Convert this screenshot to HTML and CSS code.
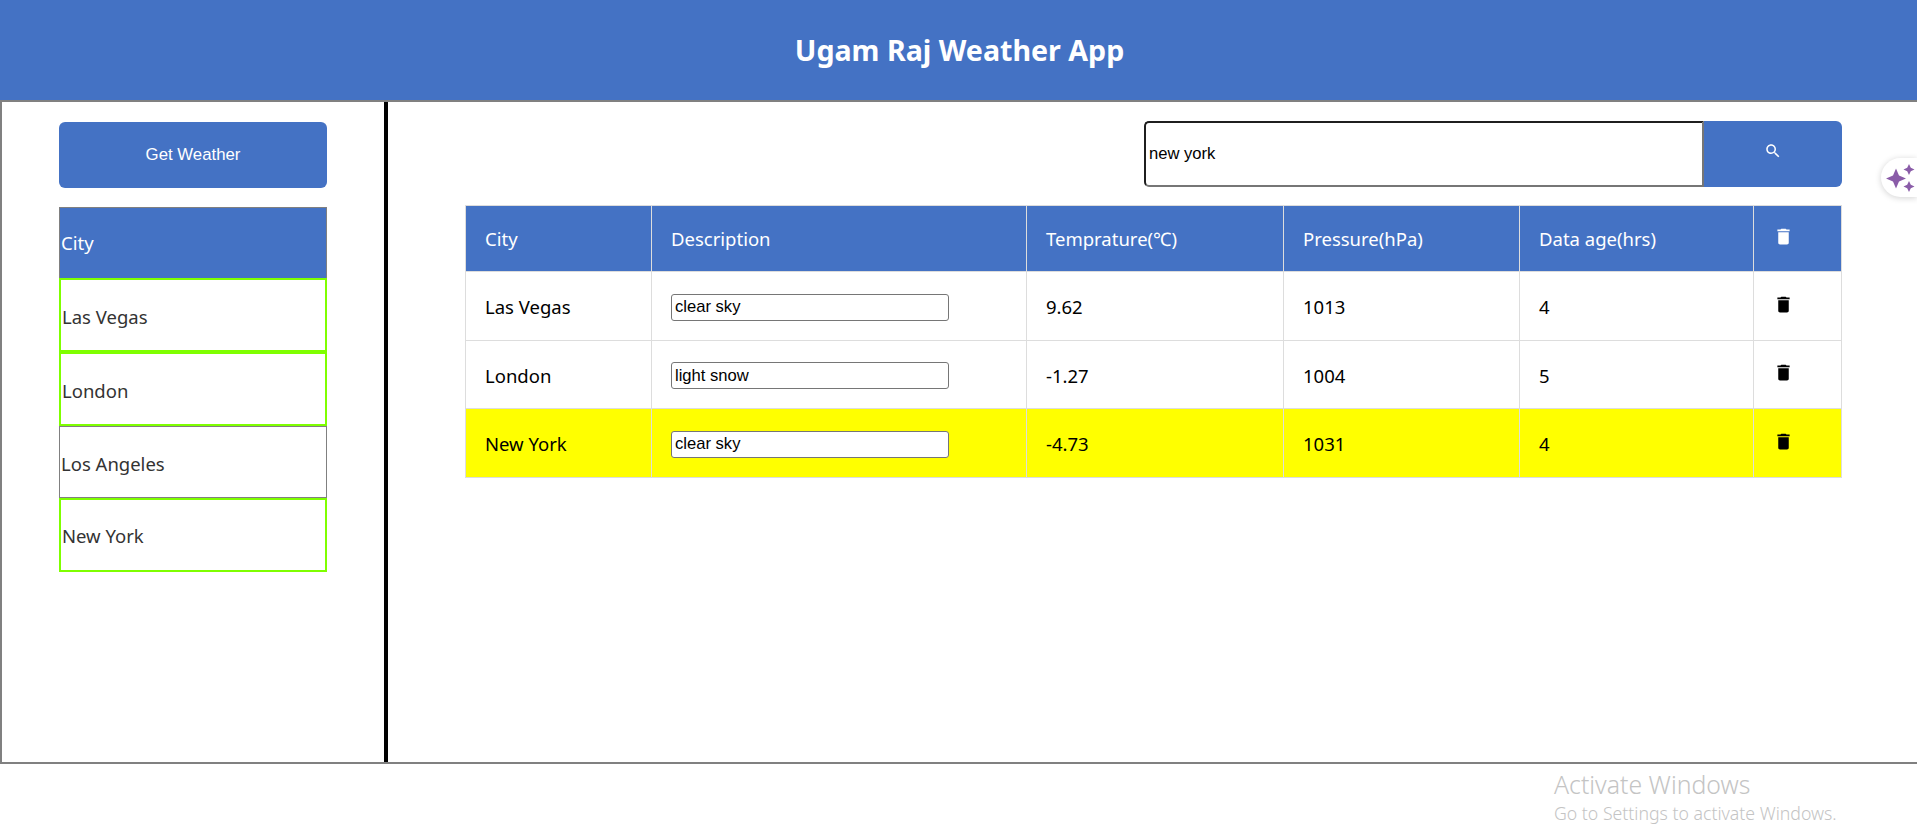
FILE: index.html
```html
<!DOCTYPE html>
<html lang="en">
<head>
    <meta charset="UTF-8">
    <meta name="viewport" content="width=device-width, initial-scale=1.0">
    <title>Ugam Raj Weather App</title>
    <link rel="stylesheet" href="styles.css">
</head>
<body>
    <header class="app-header">
        <h1>Ugam Raj Weather App</h1>
    </header>

    <div class="app-body">
        <aside class="sidebar">
            <button class="get-weather" type="button">Get Weather</button>
            <div class="city-list">
                <div class="city-head">City</div>
                <div class="city-item city-found">Las Vegas</div>
                <div class="city-item city-found">London</div>
                <div class="city-item city-plain">Los Angeles</div>
                <div class="city-item city-found">New York</div>
            </div>
        </aside>

        <main class="content">
            <form class="search">
                <input class="search-input" type="text" value="new york">
                <button class="search-btn" type="button" aria-label="Search">
                    <svg class="search-icon" viewBox="0 0 24 24"><path d="M15.5 14h-.79l-.28-.27C15.41 12.59 16 11.11 16 9.5 16 5.91 13.09 3 9.5 3S3 5.91 3 9.5 5.91 16 9.5 16c1.61 0 3.09-.59 4.23-1.57l.27.28v.79l5 4.99L20.49 19l-4.99-5zm-6 0C7.01 14 5 11.99 5 9.5S7.01 5 9.5 5 14 7.01 14 9.5 11.99 14 9.5 14z"/></svg>
                </button>
            </form>

            <table class="weather">
                <thead>
                    <tr>
                        <th class="col-city">City</th>
                        <th class="col-desc">Description</th>
                        <th class="col-temp">Temprature(&#8451;)</th>
                        <th class="col-press">Pressure(hPa)</th>
                        <th class="col-age">Data age(hrs)</th>
                        <th class="col-del"><svg class="trash" viewBox="0 0 24 24"><path d="M6 19c0 1.1.9 2 2 2h8c1.1 0 2-.9 2-2V7H6v12zM19 4h-3.5l-1-1h-5l-1 1H5v2h14V4z"/></svg></th>
                    </tr>
                </thead>
                <tbody>
                    <tr>
                        <td>Las Vegas</td>
                        <td><input class="desc-input" type="text" value="clear sky"></td>
                        <td>9.62</td>
                        <td>1013</td>
                        <td>4</td>
                        <td><svg class="trash" viewBox="0 0 24 24"><path d="M6 19c0 1.1.9 2 2 2h8c1.1 0 2-.9 2-2V7H6v12zM19 4h-3.5l-1-1h-5l-1 1H5v2h14V4z"/></svg></td>
                    </tr>
                    <tr>
                        <td>London</td>
                        <td><input class="desc-input" type="text" value="light snow"></td>
                        <td>-1.27</td>
                        <td>1004</td>
                        <td>5</td>
                        <td><svg class="trash" viewBox="0 0 24 24"><path d="M6 19c0 1.1.9 2 2 2h8c1.1 0 2-.9 2-2V7H6v12zM19 4h-3.5l-1-1h-5l-1 1H5v2h14V4z"/></svg></td>
                    </tr>
                    <tr class="row-active">
                        <td>New York</td>
                        <td><input class="desc-input" type="text" value="clear sky"></td>
                        <td>-4.73</td>
                        <td>1031</td>
                        <td>4</td>
                        <td><svg class="trash" viewBox="0 0 24 24"><path d="M6 19c0 1.1.9 2 2 2h8c1.1 0 2-.9 2-2V7H6v12zM19 4h-3.5l-1-1h-5l-1 1H5v2h14V4z"/></svg></td>
                    </tr>
                </tbody>
            </table>
        </main>
    </div>

    <div class="assistant-tab">
        <svg class="sparkle" viewBox="0 0 36 39"><path d="M15 10.500L18 17.500 25 20.500 18 23.500 15 30.500 12 23.500 5 20.500 12 17.500zM28 6L29.800 9.700 33.500 11.500 29.800 13.300 28 17 26.200 13.300 22.500 11.500 26.200 9.700zM28 23L29.800 26.700 33.500 28.500 29.800 30.300 28 34 26.200 30.300 22.500 28.500 26.200 26.700z"/></svg>
    </div>

    <div class="activate">
        <div class="activate-title">Activate Windows</div>
        <div class="activate-sub">Go to Settings to activate Windows.</div>
    </div>
</body>
</html>
```

FILE: styles.css
```css
* {
    box-sizing: border-box;
}

body {
    margin: 0;
    background-color: #fff;
    font-family: "Noto Sans", "Open Sans", sans-serif;
    font-size: 18.5px;
    overflow: hidden;
}

.app-header {
    height: 100px;
    display: flex;
    align-items: center;
    justify-content: center;
    padding-left: 2px;
    background-color: #4472c4;
}

.app-header h1 {
    margin: 0 0 1px;
    color: #fff;
    font-size: 28.6px;
    font-weight: 700;
}

.app-body {
    display: flex;
    height: 664px;
    border-top: 2px solid #808080;
    border-bottom: 2px solid #808080;
    border-left: 2px solid #808080;
}

/* left column */
.sidebar {
    width: 386px;
    flex-shrink: 0;
    padding: 20px 0 0 57px;
    border-right: 4px solid #000;
}

.get-weather {
    display: block;
    width: 268px;
    height: 66px;
    padding: 0 0 1px;
    border: none;
    border-radius: 6px;
    background-color: #4472c4;
    color: #fff;
    font-family: "Liberation Sans", Arial, sans-serif;
    font-size: 16.8px;
}

.city-list {
    width: 268px;
    margin-top: 19px;
}

.city-head,
.city-item {
    display: flex;
    align-items: center;
    padding-top: 3px;
}

.city-head {
    height: 71px;
    padding-left: 1px;
    padding-top: 0;
    padding-bottom: 1px;
    border: 1px solid #808080;
    border-bottom: none;
    background-color: #4472c4;
    color: #fff;
}

.city-item {
    height: 74px;
    color: #333;
}

.city-found {
    padding-left: 1px;
    border: 2px solid #7fff00;
}

.city-plain {
    height: 72px;
    padding-left: 1px;
    padding-top: 2px;
    border: 1px solid #808080;
}

.city-item:last-child {
    padding-top: 1px;
}

/* right column */
.content {
    flex: 1;
    padding: 19px 76px 0 77px;
}

.search {
    display: flex;
    justify-content: flex-end;
    height: 66px;
}

.search-input {
    width: 560px;
    height: 66px;
    padding: 0 3px;
    border: 2px solid;
    border-color: #1f1f1f #767676 #767676 #1f1f1f;
    border-radius: 5px 0 0 5px;
    font-family: "Liberation Sans", Arial, sans-serif;
    font-size: 16.6px;
    color: #000;
}

.search-btn {
    width: 138px;
    height: 66px;
    padding: 0 0 3px;
    border: none;
    border-radius: 0 6px 6px 0;
    background-color: #4472c4;
}

.search-icon {
    width: 18px;
    height: 18px;
    fill: #fff;
}

.weather {
    width: 1376px;
    margin-top: 18px;
    border-collapse: collapse;
    table-layout: fixed;
}

.weather th,
.weather td {
    height: 68.5px;
    padding: 2px 19px 0;
    border: 1px solid #ddd;
    text-align: left;
    font-weight: 400;
    color: #000;
}

.weather th {
    height: 66px;
    padding-top: 0;
    background-color: #4472c4;
    color: #fff;
}

.col-city { width: 186px; }
.col-desc { width: 375px; }
.col-temp { width: 257px; }
.col-press { width: 236px; }
.col-age { width: 234px; }
.col-del { width: 88px; }

.row-active td {
    background-color: #ff0;
}

.desc-input {
    display: block;
    width: 278px;
    height: 27px;
    margin-top: 1px;
    padding: 0 3px;
    border: 1px solid #767676;
    border-radius: 3px;
    background-color: #fff;
    font-family: "Liberation Sans", Arial, sans-serif;
    font-size: 16.6px;
    color: #000;
}

.trash {
    display: block;
    width: 21px;
    height: 21px;
    margin-bottom: 5px;
    fill: #000;
}

.weather th .trash {
    margin-bottom: 4px;
    fill: #fff;
}

/* things that sit on top of the page */
.assistant-tab {
    position: absolute;
    top: 158px;
    right: 0;
    width: 36px;
    height: 39px;
    border-radius: 20px 0 0 20px;
    background-color: #fff;
    box-shadow: 0 1px 6px rgba(0, 0, 0, 0.18);
}

.sparkle {
    display: block;
    width: 36px;
    height: 39px;
    fill: #8a5ca8;
}

.activate {
    position: absolute;
    top: 768px;
    left: 1554px;
    color: #c4c4c4;
    font-weight: 300;
}

.activate-title {
    font-size: 24.8px;
    line-height: 32px;
}

.activate-sub {
    margin-top: 1px;
    font-size: 17.7px;
    line-height: 24px;
}
```
